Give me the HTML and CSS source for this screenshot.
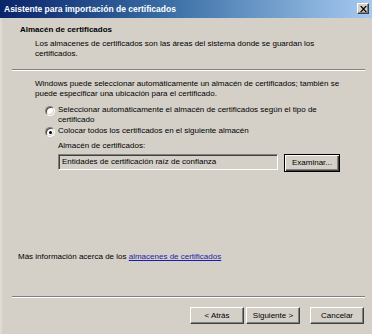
FILE: index.html
```html
<!DOCTYPE html>
<html lang="es">
<head>
<meta charset="utf-8">
<title>Asistente para importación de certificados</title>
<link rel="stylesheet" href="styles.css">
</head>
<body>
<div class="window">
  <div class="titlebar">
    <span class="title">Asistente para importación de certificados</span>
    <span class="close"><svg width="7" height="6" viewBox="0 0 7 6"><path d="M0 0h1.6l1.9 2 1.9-2H7L4.3 3 7 6H5.4L3.5 4 1.6 6H0l2.7-3z" fill="#000"/></svg></span>
  </div>
  <div class="header">
    <div class="h-title">Almacén de certificados</div>
    <div class="h-desc">Los almacenes de certificados son las áreas del sistema donde se guardan los certificados.</div>
  </div>
  <div class="sep"></div>
  <div class="content">
    <p class="intro">Windows puede seleccionar automáticamente un almacén de certificados; también se puede especificar una ubicación para el certificado.</p>
    <div class="radio-row r1">
      <span class="radio"></span>
      <span class="radio-label">Seleccionar automáticamente el almacén de certificados según el tipo de certificado</span>
    </div>
    <div class="radio-row r2">
      <span class="radio checked"><span class="dot"></span></span>
      <span class="radio-label">Colocar todos los certificados en el siguiente almacén</span>
    </div>
    <div class="store">
      <div class="store-label">Almacén de certificados:</div>
      <div class="store-row">
        <div class="field">Entidades de certificación raíz de confianza</div>
        <div class="btn default">Examinar...</div>
      </div>
    </div>
  </div>
  <div class="more">Más información acerca de los <a href="#">almacenes de certificados</a></div>
  <div class="sep bottom"></div>
  <div class="footer">
    <div class="btn">&lt; Atrás</div>
    <div class="btn">Siguiente &gt;</div>
    <div class="btn cancel">Cancelar</div>
  </div>
</div>
</body>
</html>
```
FILE: styles.css
```css
* { box-sizing: border-box; }
html, body {
  margin: 0;
  padding: 0;
  width: 372px;
  height: 334px;
  overflow: hidden;
  background: #d4d0c8;
}
body {
  font-family: "Liberation Sans", Arial, sans-serif;
  font-size: 8px;
  line-height: 10px;
  color: #000;
}
.window {
  width: 372px;
  height: 334px;
  display: flex;
  flex-direction: column;
  border-left: 2px solid #dedbd4;
}
.titlebar {
  height: 18px;
  flex: none;
  display: flex;
  align-items: center;
  justify-content: space-between;
  padding: 0 3px 1px 1px;
  background: linear-gradient(to right, #0a246a 0%, #3a6ea5 45%, #a6caf0 100%);
  margin-left: -2px;
}
.title {
  color: #fff;
  font-weight: bold;
  font-size: 8.5px;
  padding-left: 3px;
}
.close {
  width: 12px;
  height: 11px;
  background: #d4d0c8;
  border-top: 1px solid #fff;
  border-left: 1px solid #fff;
  border-right: 1px solid #404040;
  border-bottom: 1px solid #404040;
  box-shadow: inset -1px -1px 0 #808080;
  display: flex;
  align-items: center;
  justify-content: center;
}
.header {
  padding: 7px 0 0 18px;
}
.h-title {
  font-weight: bold;
}
.h-desc {
  margin-top: 4px;
  margin-left: 15px;
  width: 300px;
}
.sep {
  margin: 10px 7px 0 10px;
  border-top: 1px solid #808080;
  border-bottom: 1px solid #fff;
}
.content {
  padding-left: 33px;
}
.intro {
  margin: 8px 0 0 0;
  width: 312px;
}
.radio-row {
  display: flex;
  align-items: flex-start;
  gap: 3px;
  margin-left: 10px;
}
.r1 { margin-top: 6px; }
.r2 { margin-top: 1px; }
.radio-label { width: 260px; }
.radio {
  flex: none;
  width: 10px;
  height: 10px;
  margin-top: 1px;
  border-radius: 50%;
  background: #fff;
  border: 1px solid;
  border-color: #808080 #fff #fff #808080;
  box-shadow: inset 1px 1px 0 #404040, inset -1px -1px 0 #d4d0c8;
  display: flex;
  align-items: center;
  justify-content: center;
}
.dot {
  width: 3px;
  height: 3px;
  border-radius: 50%;
  background: #000;
}
.store {
  padding-left: 23px;
  margin-top: 4px;
}
.store-row {
  display: flex;
  align-items: flex-start;
  gap: 6px;
  margin-top: 3px;
}
.field {
  width: 220px;
  height: 16px;
  padding: 2px 3px;
  border: 1px solid;
  border-color: #808080 #fff #fff #808080;
  box-shadow: inset 1px 1px 0 #404040, inset -1px -1px 0 #d4d0c8;
  background: #d4d0c8;
}
.btn {
  height: 17px;
  display: flex;
  align-items: center;
  justify-content: center;
  border: 1px solid;
  border-color: #fff #404040 #404040 #fff;
  box-shadow: inset -1px -1px 0 #808080;
  background: #d4d0c8;
}
.btn.default {
  width: 56px;
  border-color: #000;
  box-shadow: inset 1px 1px 0 #fff, inset -1px -1px 0 #404040, inset -2px -2px 0 #808080;
  height: 18px;
}
.more {
  margin-top: auto;
  padding-left: 16px;
}
.more a {
  color: #1c1ca8;
  text-decoration: underline;
}
.sep.bottom {
  margin-top: 34px;
}
.footer {
  display: flex;
  justify-content: flex-end;
  padding: 9px 8px 10px 0;
}
.footer .btn { width: 54px; }
.footer .btn + .btn { margin-left: 2px; }
.footer .cancel { margin-left: 10px !important; }
```
